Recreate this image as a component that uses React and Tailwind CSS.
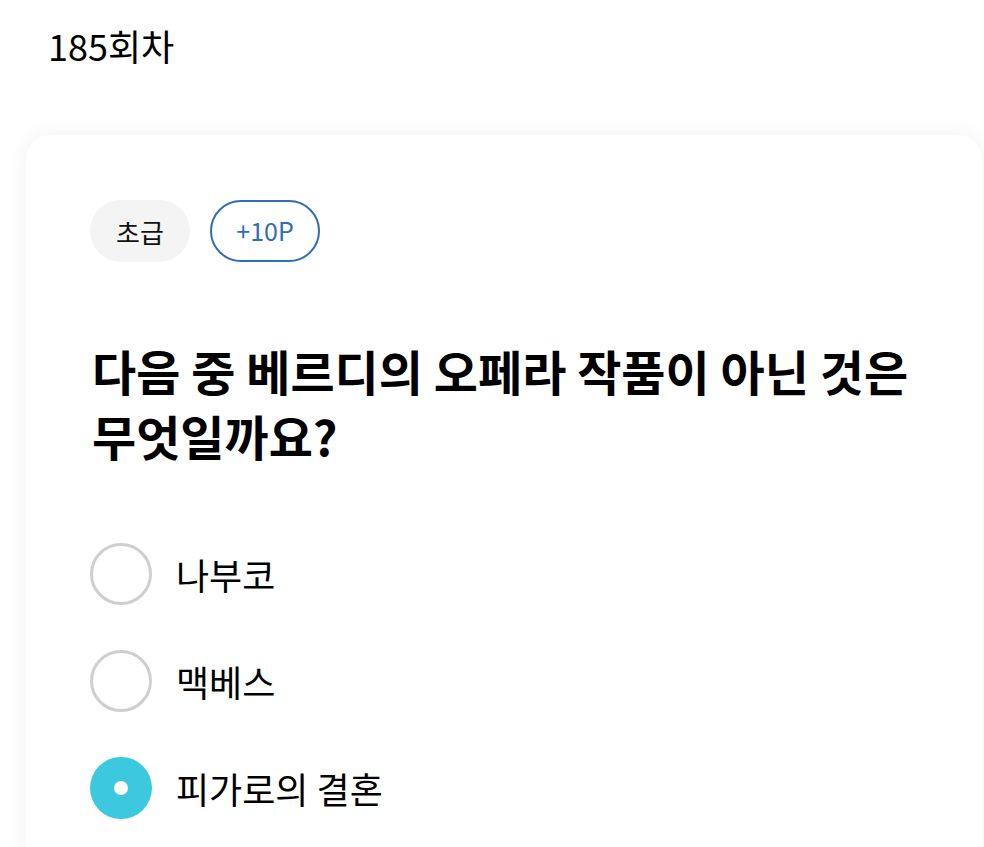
export default function App() {
  const options = [
    { label: "나부코", selected: false },
    { label: "맥베스", selected: false },
    { label: "피가로의 결혼", selected: true },
  ];
  return (
    <div
      className="w-[984px] h-[847px] overflow-hidden bg-white text-black"
      style={{ fontFamily: '"Noto Sans CJK KR", "Noto Sans", sans-serif' }}
    >
      <div className="pl-[48px] pt-[20px] h-[135px]">
        <div className="text-[36px] leading-[50px]">185회차</div>
      </div>
      <div className="ml-[26px] mr-[2px] rounded-[24px] bg-white shadow-[0_0_24px_rgba(0,0,0,0.06)] pl-[64px] pr-[40px] pt-[65px] pb-[200px]">
        <div className="flex gap-[20px]">
          <div className="h-[62px] w-[100px] rounded-full bg-[#f4f4f4] flex items-center justify-center text-[26px] text-[#111]">
            초급
          </div>
          <div className="h-[62px] w-[110px] rounded-full border-2 border-[#2f6db5] flex items-center justify-center text-[25px] text-[#2f6db5]">
            +10P
          </div>
        </div>
        <div className="mt-[76px] text-[48px] font-bold leading-[65px] pl-[2px] whitespace-nowrap">
          다음 중 베르디의 오페라 작품이 아닌 것은
          <br />
          무엇일까요?
        </div>
        <div className="mt-[75px] flex flex-col gap-[45px]">
          {options.map((o) => (
            <div key={o.label} className="flex items-center gap-[24px]">
              {o.selected ? (
                <div className="w-[62px] h-[62px] rounded-full bg-[#3cc8de] flex items-center justify-center">
                  <div className="w-[14px] h-[14px] rounded-full bg-white" />
                </div>
              ) : (
                <div className="w-[62px] h-[62px] rounded-full border-[3px] border-[#cfcfcf]" />
              )}
              <div className="text-[36px] leading-[50px]">{o.label}</div>
            </div>
          ))}
        </div>
      </div>
    </div>
  );
}
